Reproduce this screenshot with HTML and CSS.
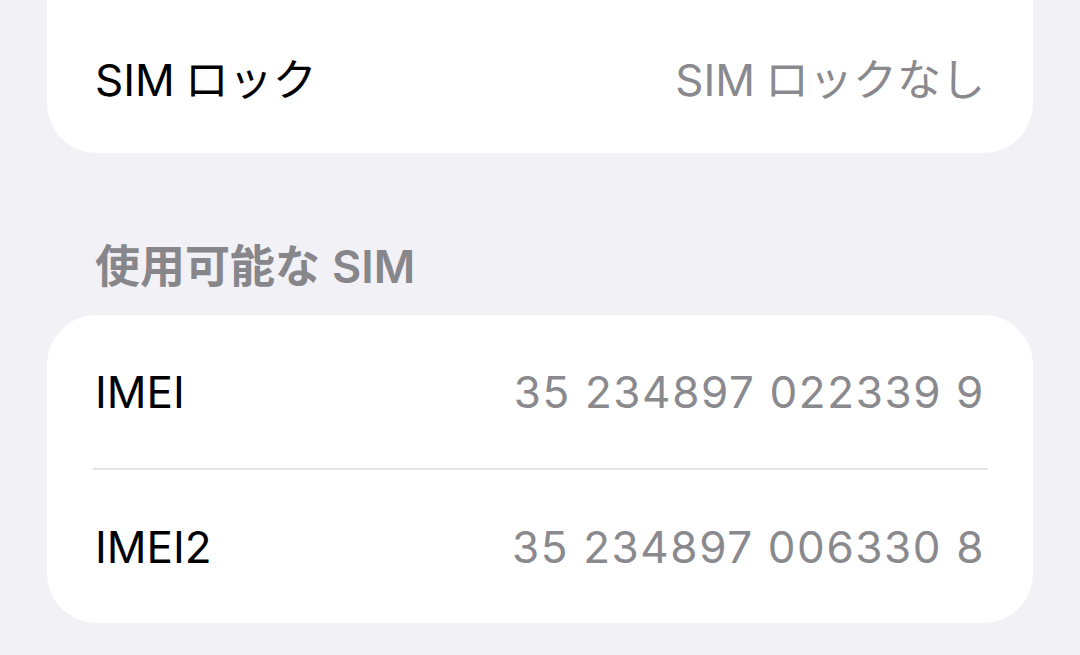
FILE: index.html
```html
<!DOCTYPE html>
<html lang="ja">
<head>
    <meta charset="UTF-8">
    <meta name="viewport" content="width=device-width, initial-scale=1.0">
    <title>情報</title>
    <link rel="stylesheet" href="styles.css">
</head>
<body>
    <div class="page">
        <!-- SIM lock (card scrolled partly off the top) -->
        <div class="card card-cut">
            <div class="row">
                <span class="label"><span class="latin">SIM</span>ロック</span>
                <span class="value"><span class="latin">SIM</span>ロックなし</span>
            </div>
        </div>

        <h2 class="section-title">使用可能な<span class="latin-before">SIM</span></h2>

        <div class="card">
            <div class="row">
                <span class="label">IMEI</span>
                <span class="value number">35 234897 022339 9</span>
            </div>
            <div class="divider"></div>
            <div class="row">
                <span class="label">IMEI2</span>
                <span class="value number">35 234897 006330 8</span>
            </div>
        </div>
    </div>
</body>
</html>
```

FILE: styles.css
```css
body {
    margin: 0;
    background-color: #f2f1f6;
    font-family: Inter, "Noto Sans CJK JP", sans-serif;
    color: #000;
    overflow: hidden;
}

.page {
    padding: 0 47px;
}

.card {
    background-color: #ffffff;
    border-radius: 50px;
}

.card-cut {
    border-radius: 0 0 50px 50px;
}

.row {
    display: flex;
    justify-content: space-between;
    align-items: center;
    height: 153px;
    padding: 0 48px;
    font-size: 44px;
}

.value {
    color: #8a8a8e;
}

.number {
    letter-spacing: 1.6px;
}

/* iOS puts a little air between latin and kana */
.latin {
    margin-right: 10px;
}

.latin-before {
    margin-left: 12px;
}

.divider {
    height: 2px;
    margin: 0 45px 0 46px;
    background-color: #e4e4e7;
}

.section-title {
    margin: 0;
    padding: 88px 48px 22px;
    line-height: 52px;
    font-size: 45px;
    font-weight: 600;
    color: #86868b;
}
```
